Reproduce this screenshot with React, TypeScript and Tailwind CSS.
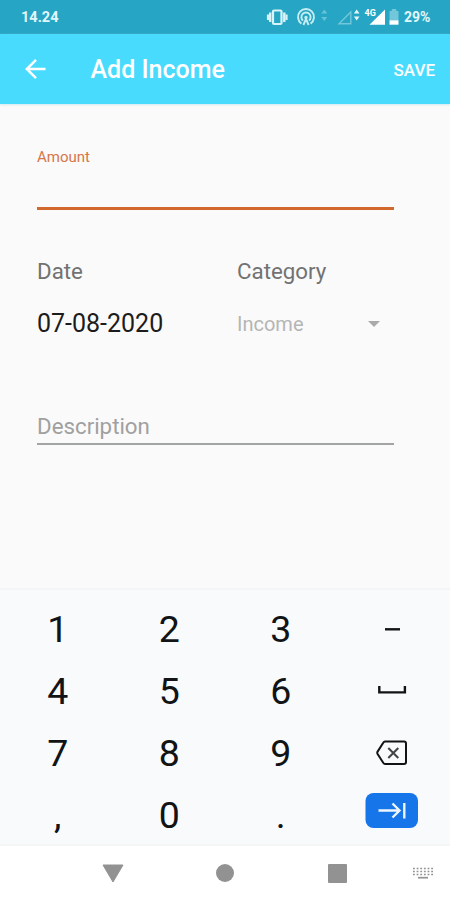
import React from 'react';

function Key({ children }: { children: React.ReactNode }) {
  return (
    <button className="flex h-[62px] items-center justify-center text-[37.500px] leading-[62px] text-[#111315]">
      {children}
    </button>
  );
}

function Digit({ children }: { children: React.ReactNode }) {
  return (
    <Key>
      <span>{children}</span>
    </Key>
  );
}

function StatusIcons() {
  return (
    <svg className="h-[34px] w-[140px]" viewBox="262 0 140 34" fill="none">
      <g stroke="#d9f4f9">
        <rect x="273" y="10.500" width="8.500" height="13.500" rx="1" strokeWidth="2.200" />
        <path d="M270.200 12.500v9.500M284.300 12.500v9.500" strokeWidth="2.400" />
        <path d="M268 14.500v5.500M286.500 14.500v5.500" strokeWidth="2.200" />
      </g>
      <g stroke="#c5edf4" strokeWidth="1.900">
        <path d="M301.400 23.600a8 8 0 1 1 9.200 0" />
        <path d="M303 20.600a4.600 4.600 0 1 1 6 0" />
        <circle cx="306" cy="17.400" r="1.700" fill="#c5edf4" stroke="none" />
        <path d="M303.400 25l2.600-6 2.600 6" />
      </g>
      <path d="M324.300 9.500l3 4h-6zM324.300 21l3-4h-6z" fill="#65c3d7" />
      <path d="M339 23.800h11.800V12z" stroke="#72c7da" strokeWidth="1.400" />
      <path d="M356.700 9.500l2.800 4h-5.600zM356.700 20.500l2.800-4h-5.600z" fill="#e6f8fb" />
      <path d="M369.500 24.700H385V9.500z" fill="#fff" />
      <path d="M389.500 11h2.300V9h4.400v2h2.300v9.500h-9z" fill="#72c7da" />
      <path d="M389.500 20.300h9v4.400h-9z" fill="#fff" />
      <text x="364.500" y="16.200" fill="#fff" className="text-[9px] font-bold">4G</text>
    </svg>
  );
}

export default function App() {
  return (
    <div className="flex h-[900px] w-[450px] flex-col overflow-hidden bg-[#fafafa] font-[Roboto,sans-serif]">
      <div className="flex h-[34px] shrink-0 items-center bg-[#26a5c4] pl-[21px] text-[14px] leading-[34px] font-bold text-[#e2f7fb]">
        <span className="w-[241px] pt-[2px] text-[14.500px]">14.24</span>
        <StatusIcons />
        <span className="pl-[2px] text-[14px] font-bold">29%</span>
      </div>

      <header className="flex h-[70px] shrink-0 items-center bg-[#48dbfd] pr-[15px] text-white shadow-[0_1px_2px_#cfe9ef]">
        <svg className="ml-[24px] h-[24px] w-[24px]" viewBox="0 0 24 24" fill="none" stroke="currentColor" strokeWidth="2.500">
          <path d="M21.500 12H3M12 2.800L2.800 12l9.200 9.200" />
        </svg>
        <h1 className="ml-[42.500px] pt-[2px] text-[25px] leading-[30px] font-medium">Add Income</h1>
        <button className="ml-auto pt-px text-[17px] leading-[20px] font-medium">SAVE</button>
      </header>

      <main className="flex h-[484px] shrink-0 flex-col pl-[37px] pt-[43px]">
        <div className="h-[63px] w-[357px] border-b-[3px] border-[#d3682f]">
          <label className="block text-[15px] leading-[20px] text-[#d5764a]">Amount</label>
        </div>
        <div className="mt-[48px] flex">
          <div className="w-[200px]">
            <div className="text-[22.300px] leading-[26px] text-[#727272]">Date</div>
            <div className="mt-[25px] text-[25px] leading-[30px] text-[#1c1c1c]">07-08-2020</div>
          </div>
          <div className="w-[157px]">
            <div className="text-[22.300px] leading-[26px] text-[#727272]">Category</div>
            <div className="mt-[27px] flex items-center text-[20px] leading-[26px] text-[#b5b5b5]">
              <span>Income</span>
              <svg className="ml-auto mr-[14px] h-[6px] w-[12px]" viewBox="0 0 12 6">
                <path d="M0 0h12L6 6z" fill="#aaa" />
              </svg>
            </div>
          </div>
        </div>
        <div className="mt-[74px] h-[32px] w-[357px] border-b-2 border-[#a3a5a4] text-[22.300px] leading-[26px] text-[#a0a0a0]">
          Description
        </div>
      </main>

      <section className="grid h-[258px] shrink-0 grid-cols-4 content-start border-y-2 border-[#f4f5f5] bg-[#f8fafc] px-[2px] pt-[8px]">
        <Digit>1</Digit>
        <Digit>2</Digit>
        <Digit>3</Digit>
        <Key>
          <svg className="h-[62px] w-[56px]" viewBox="364 598 56 62">
            <path d="M385 629.300h15" stroke="currentColor" strokeWidth="2.400" />
          </svg>
        </Key>
        <Digit>4</Digit>
        <Digit>5</Digit>
        <Digit>6</Digit>
        <Key>
          <svg className="h-[62px] w-[56px]" viewBox="364 660 56 62" fill="none">
            <path d="M379.300 686v6.400h25.600V686" stroke="currentColor" strokeWidth="2.400" />
          </svg>
        </Key>
        <Digit>7</Digit>
        <Digit>8</Digit>
        <Digit>9</Digit>
        <Key>
          <svg className="h-[62px] w-[56px]" viewBox="364 722 56 62" fill="none" stroke="currentColor" strokeWidth="2">
            <path d="M385 741.500h19q2 0 2 2v18.500q0 2-2 2h-19q-1 0-1.600-1l-5.800-9q-.7-1.200 0-2.400l5.800-9q.6-1.100 1.600-1.100z" />
            <path d="M388.300 748l10 10M398.300 748l-10 10" stroke="#444" />
          </svg>
        </Key>
        <Digit>,</Digit>
        <Digit>0</Digit>
        <Digit>.</Digit>
        <Key>
          <svg className="h-[62px] w-[56px]" viewBox="364 784 56 62" fill="none">
            <rect x="365.500" y="793" width="52.500" height="35" rx="8" fill="#1775ea" />
            <path d="M378.500 810.500h20.500M392.500 803.500l7 7-7 7M404.300 803v15.500" stroke="#edf6ff" strokeWidth="2.400" />
          </svg>
        </Key>
      </section>

      <nav className="flex h-[54px] shrink-0 items-center bg-white text-[#929292]">
        <svg className="ml-[102px] h-[20px] w-[22px]" viewBox="0 0 22 20" fill="currentColor">
          <path d="M1 2h20L11 19z" stroke="currentColor" strokeLinejoin="round" />
        </svg>
        <div className="ml-[92px] h-[18px] w-[18px] rounded-full bg-current" />
        <div className="ml-[94px] h-[19px] w-[19px] rounded-[1px] bg-current" />
        <svg className="ml-[65px] h-[12px] w-[22px]" viewBox="0 0 22 12" fill="none" stroke="currentColor">
          <path d="M1 1.500h20M1 4.500h20M1 7.500h20" strokeWidth="1.700" strokeDasharray="1.800 1.840" />
          <path d="M6 10.700h10" strokeWidth="1.700" />
        </svg>
      </nav>
    </div>
  );
}
